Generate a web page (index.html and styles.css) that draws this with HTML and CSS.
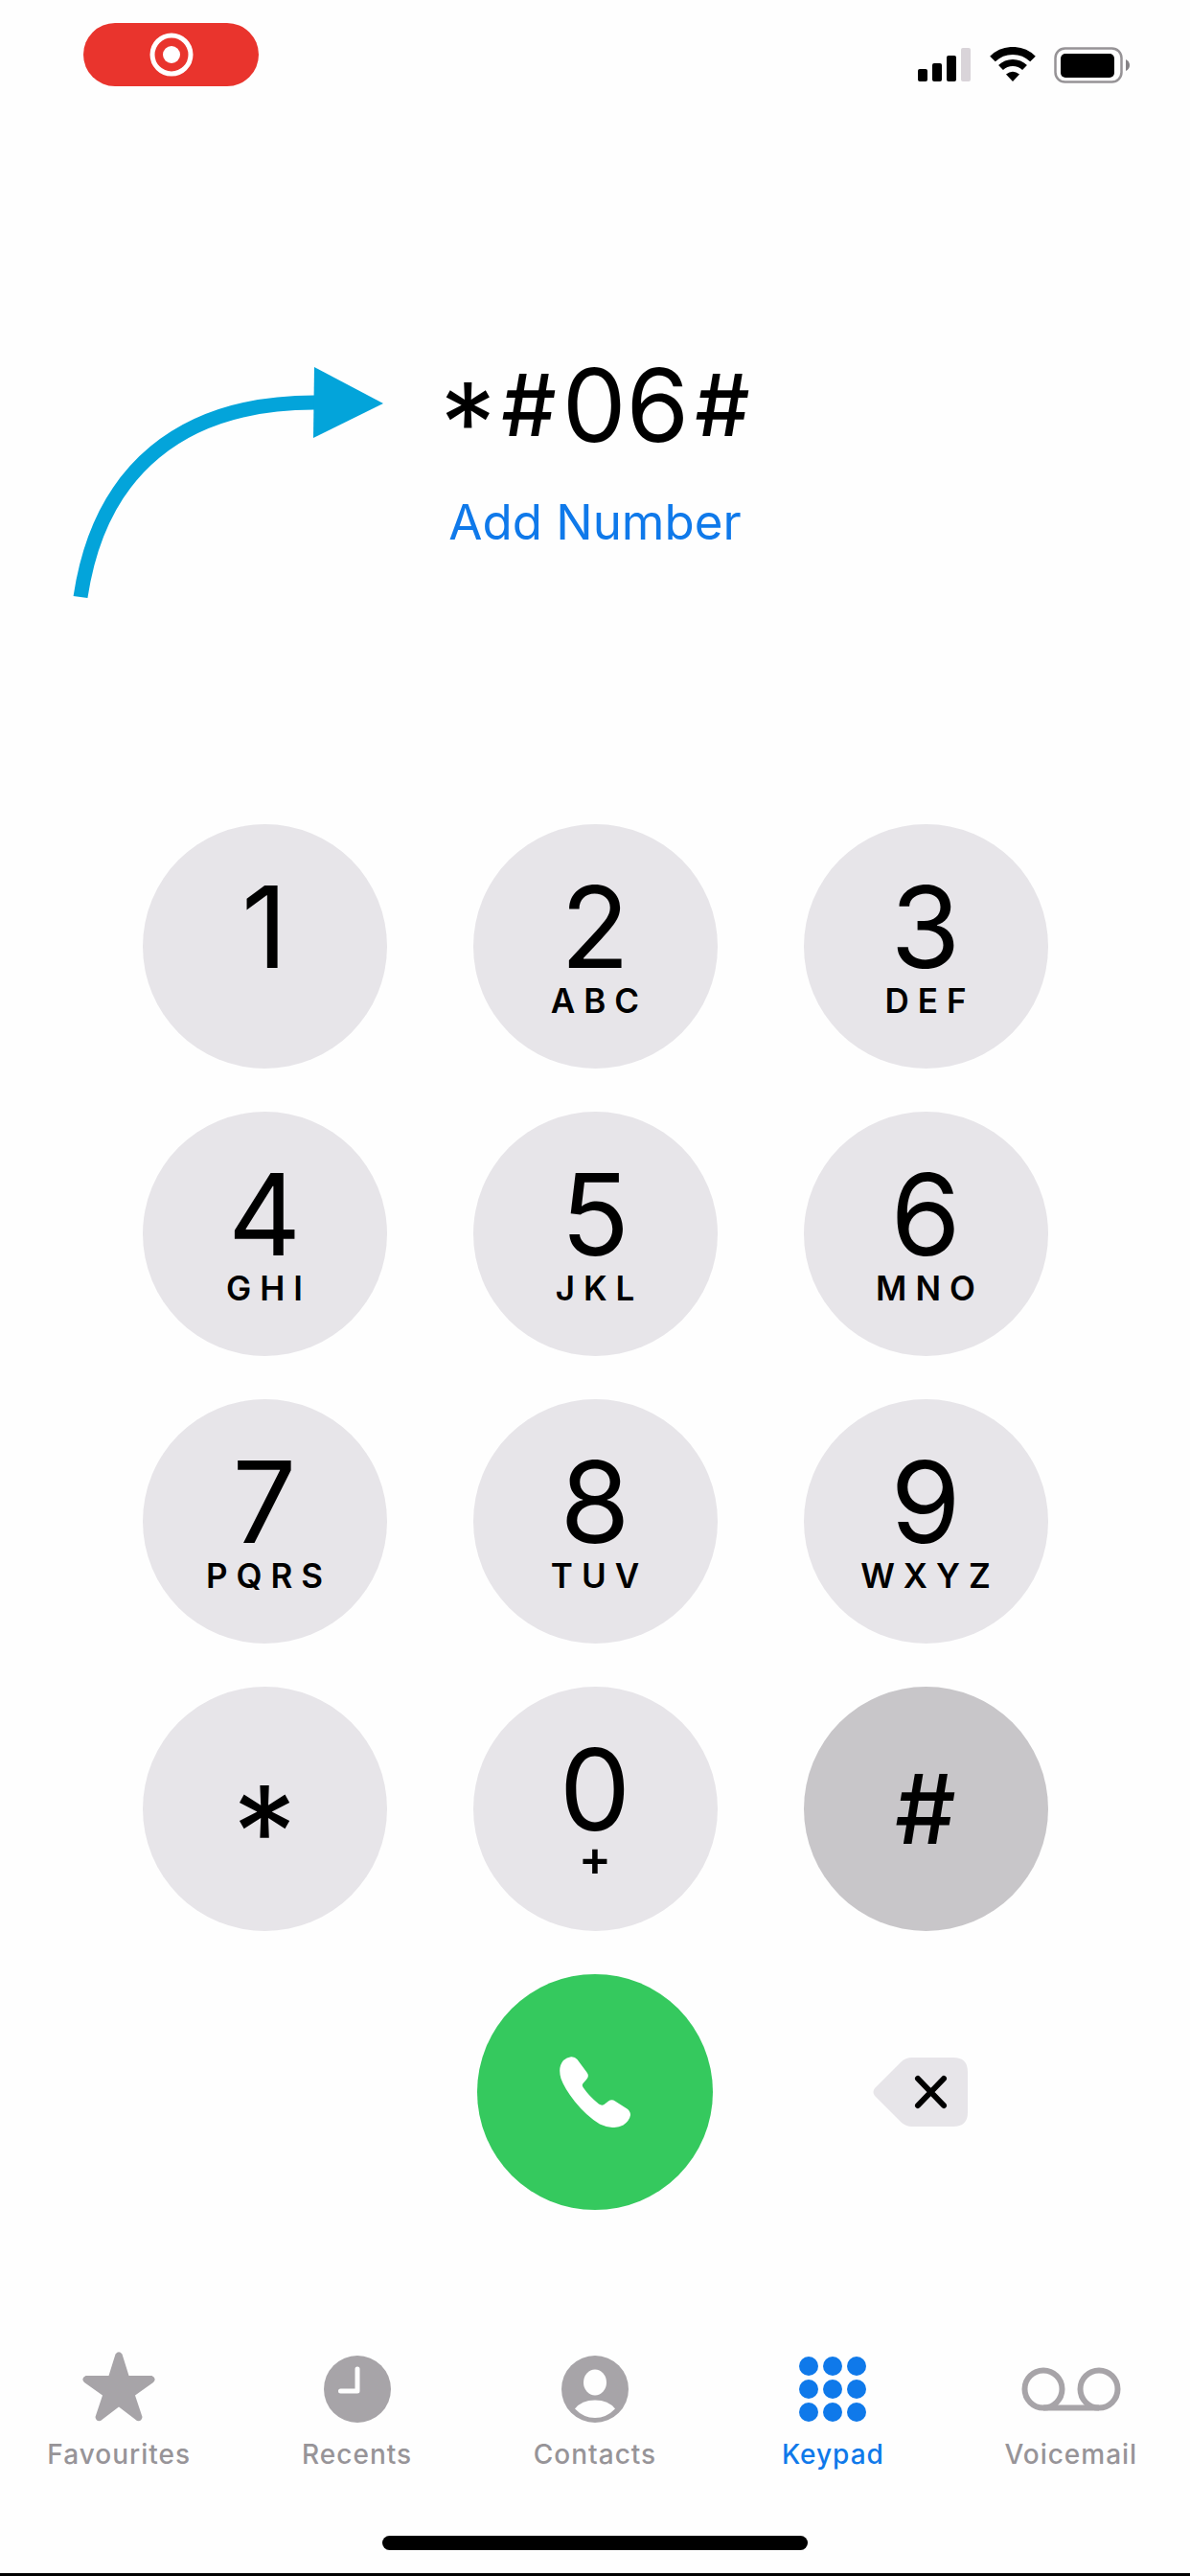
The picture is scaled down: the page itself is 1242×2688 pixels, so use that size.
FILE: index.html
```html
<!DOCTYPE html>
<html lang="en-GB">
<head>
    <meta charset="UTF-8">
    <meta name="viewport" content="width=device-width, initial-scale=1">
    <title>Phone</title>
    <link rel="stylesheet" href="styles.css">
</head>
<body>
    <div class="phone">
        <!-- Status bar -->
        <header class="status-bar">
            <button class="recording" aria-label="Screen recording">
                <svg width="48" height="48" viewBox="0 0 48 48">
                    <circle cx="24" cy="24" r="20" fill="none" stroke="#fff" stroke-width="5"/>
                    <circle cx="24" cy="24" r="9" fill="#fff"/>
                </svg>
            </button>
            <div class="indicators">
                <svg width="56" height="38" viewBox="0 0 56 38">
                    <rect x="0" y="23" width="10" height="13" rx="2"/>
                    <rect x="15" y="17" width="10" height="19" rx="2"/>
                    <rect x="30" y="9" width="10" height="27" rx="2"/>
                    <rect x="45" y="1" width="10" height="35" rx="2" fill="#d9d4d9"/>
                </svg>
                <svg width="48" height="38" viewBox="0 0 48 38">
                    <path d="M3 12.500A30 30 0 0 1 45 12.500" fill="none" stroke="#000" stroke-width="8"/>
                    <path d="M11.500 21.500A18 18 0 0 1 36.500 21.500" fill="none" stroke="#000" stroke-width="7"/>
                    <path d="M17 28.500Q24 23 31 28.500L24 36z"/>
                </svg>
                <svg width="80" height="38" viewBox="0 0 80 38">
                    <rect x="1.500" y="1.500" width="69" height="35" rx="10" fill="none" stroke="#969396" stroke-width="2.500"/>
                    <rect x="7" y="7" width="56" height="25" rx="5"/>
                    <path d="M75 13q4 2 4 6t-4 6z" fill="#858285"/>
                </svg>
            </div>
        </header>

        <main>
            <!-- Dialled number -->
            <section class="dialled">
                <svg class="arrow" width="330" height="250" viewBox="0 0 330 250">
                    <path d="M10 243C30 110 116 40 254 40" fill="none" stroke="#03a4da" stroke-width="15"/>
                    <path d="M254 3l72 38-73 36z" fill="#03a4da"/>
                </svg>
                <output class="number"><span class="star">*</span><span class="hash">#</span><span>06</span><span class="hash">#</span></output>
                <a href="#" class="add-number">Add Number</a>
            </section>

            <!-- Keys -->
            <section class="keypad">
                <button class="key">1</button>
                <button class="key">2<span class="letters">ABC</span></button>
                <button class="key">3<span class="letters">DEF</span></button>
                <button class="key">4<span class="letters">GHI</span></button>
                <button class="key">5<span class="letters">JKL</span></button>
                <button class="key">6<span class="letters">MNO</span></button>
                <button class="key">7<span class="letters">PQRS</span></button>
                <button class="key">8<span class="letters">TUV</span></button>
                <button class="key">9<span class="letters">WXYZ</span></button>
                <button class="key key-star">*</button>
                <button class="key">0<span class="plus">+</span></button>
                <button class="key key-hash pressed">#</button>
                <button class="call" aria-label="Call">
                    <svg width="74" height="74" viewBox="0 0 74 74">
                        <path fill="#fff" d="M12 .3Q16 0 18.500 3L28.500 16.500Q31.500 20.500 28 24L24.500 28Q23 29.700 24.500 32Q31 41.500 41 49.500Q44 51.500 46.500 50L51 46.500Q54.500 44 58 46.500L70.500 54.500Q74 57 74 61Q73 67 66.500 71.500Q56 77 42 70.500Q28 62 16 47Q5 33 1.500 23Q-2 11 4 4Q7.500.8 12 .3z"/>
                    </svg>
                </button>
                <button class="delete" aria-label="Delete">
                    <svg width="100" height="72" viewBox="0 0 100 72">
                        <path fill="#e7e5e9" d="M41 0H84Q99 0 99 15V57Q99 72 84 72H41Q34 72 29 67L2 40Q-1 36 2 32L29 5Q34 0 41 0z"/>
                        <path d="M47 22L74 50M74 22L47 50" fill="none" stroke="#000" stroke-width="6" stroke-linecap="round"/>
                    </svg>
                </button>
            </section>
        </main>

        <!-- Tabs -->
        <nav class="tab-bar">
            <a href="#" class="tab">
                <svg width="76" height="76" viewBox="0 0 76 76">
                    <path d="M34.500 2.500Q38 -2 41.500 2.500L48.500 25H72.500Q78 28 74 32L55 45.500L62.500 68Q62 73 57 72L38 57.500L19 72Q14 73 13.500 68L21 45.500L2 32Q-2 28 3.500 25H27.500z" fill="#a7a4a8"/>
                </svg>
                Favourites
            </a>
            <a href="#" class="tab">
                <svg width="76" height="76" viewBox="0 0 76 76">
                    <circle cx="38" cy="39" r="35" fill="#a7a4a8"/>
                    <path d="M38 18V41H20.500" fill="none" stroke="#fefefe" stroke-width="5" stroke-linecap="round" stroke-linejoin="round"/>
                </svg>
                Recents
            </a>
            <a href="#" class="tab">
                <svg width="76" height="76" viewBox="0 0 76 76">
                    <circle cx="38" cy="39" r="35" fill="#a7a4a8"/>
                    <ellipse cx="38" cy="32" rx="12" ry="13.500" fill="#fefefe"/>
                    <path d="M17 59.500Q24 50.500 38 50.500T59 59.500Q50 69 38 69T17 59.500z" fill="#fefefe"/>
                </svg>
                Contacts
            </a>
            <a href="#" class="tab active" aria-current="page">
                <svg width="76" height="76" viewBox="0 0 76 76" fill="#0f79ea">
                    <circle cx="13" cy="15" r="10"/>
                    <circle cx="38" cy="15" r="10"/>
                    <circle cx="63" cy="15" r="10"/>
                    <circle cx="13" cy="39" r="10"/>
                    <circle cx="38" cy="39" r="10"/>
                    <circle cx="63" cy="39" r="10"/>
                    <circle cx="13" cy="63" r="10"/>
                    <circle cx="38" cy="63" r="10"/>
                    <circle cx="63" cy="63" r="10"/>
                </svg>
                Keypad
            </a>
            <a href="#" class="tab">
                <svg width="104" height="76" viewBox="0 0 104 76" fill="none" stroke="#a7a4a8" stroke-width="6">
                    <circle cx="23" cy="39" r="19.500"/>
                    <circle cx="81" cy="39" r="19.500"/>
                    <path d="M23 58.500H81"/>
                </svg>
                Voicemail
            </a>
        </nav>
        <div class="home-bar"></div>
    </div>
</body>
</html>
```
FILE: styles.css
```css
* {
    box-sizing: border-box;
}
body {
    margin: 0;
    font-family: Inter, "Liberation Sans", sans-serif;
    background: #fefefe;
    color: #000;
}
button {
    padding: 0;
    border: none;
    background: none;
    font-family: inherit;
    color: inherit;
    cursor: pointer;
}
a {
    text-decoration: none;
}
svg {
    display: block;
}
.phone {
    display: flex;
    flex-direction: column;
    min-height: 100vh;
    border-bottom: 3px solid #000;
}

/* Status bar */
.status-bar {
    display: flex;
    justify-content: space-between;
    align-items: flex-start;
    padding: 24px 62px 0 87px;
}
.recording {
    display: flex;
    justify-content: center;
    align-items: center;
    width: 183px;
    height: 66px;
    border-radius: 33px;
    background: #e9342d;
}
.indicators {
    display: flex;
    gap: 19px;
    padding-top: 25px;
}

/* Dialled number */
.dialled {
    position: relative;
    display: flex;
    flex-direction: column;
    align-items: center;
    gap: 32px;
    padding: 273px 0 285px;
}
.arrow {
    position: absolute;
    left: 74px;
    top: 290px;
}
.number {
    display: flex;
    align-items: center;
    gap: 6px;
    height: 120px;
    font-size: 106px;
    line-height: 120px;
}
.hash {
    font-size: 90px;
    font-weight: 500;
}
/* the asterisk glyph sits high, so it is padded down to the middle */
.star {
    padding-top: 36px;
    font-size: 116px;
}
.add-number {
    font-size: 51px;
    line-height: 60px;
    color: #0f79ea;
}

/* Keys */
.keypad {
    display: grid;
    grid-template-columns: repeat(3, 255px);
    justify-content: center;
    gap: 45px 90px;
}
.key {
    display: flex;
    flex-direction: column;
    align-items: center;
    height: 255px;
    padding-top: 49px;
    border-radius: 50%;
    background: #e7e5e9;
    font-size: 118px;
    line-height: 116px;
}
.letters {
    font-size: 35px;
    font-weight: 600;
    line-height: 38px;
    letter-spacing: 9px;
    padding-left: 9px;
}
.plus {
    font-size: 51px;
    font-weight: 600;
    line-height: 28px;
}
.key-star,
.key-hash {
    justify-content: center;
    padding-top: 0;
}
.key-star {
    padding-top: 46px;
    font-size: 134px;
}
.key-hash {
    font-size: 100px;
    font-weight: 500;
}
.pressed {
    background: #c8c6c9;
}
.call {
    grid-column: 2;
    display: flex;
    justify-content: center;
    align-items: center;
    justify-self: center;
    width: 246px;
    height: 246px;
    border-radius: 50%;
    background: #35c95e;
}
.delete {
    place-self: center;
    padding-right: 10px;
}

/* Tabs */
.tab-bar {
    display: grid;
    grid-template-columns: repeat(5, 1fr);
    margin-top: auto;
    padding-bottom: 67px;
}
.tab {
    display: flex;
    flex-direction: column;
    align-items: center;
    gap: 13px;
    font-size: 28px;
    font-weight: 500;
    line-height: 36px;
    letter-spacing: 1px;
    color: #979498;
}
.active {
    color: #0f79ea;
}
.home-bar {
    align-self: center;
    width: 444px;
    height: 15px;
    margin-bottom: 24px;
    border-radius: 8px;
    background: #000;
}
```
